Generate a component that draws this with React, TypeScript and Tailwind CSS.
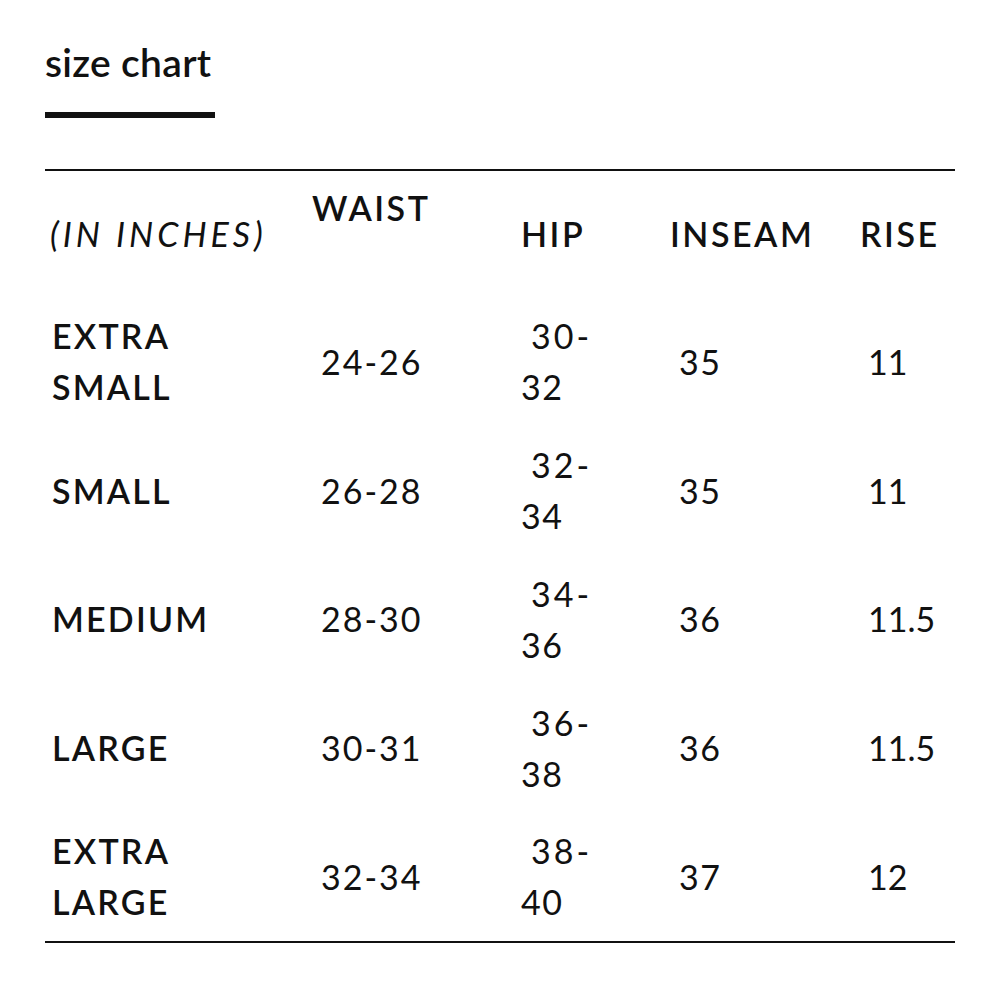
import React from "react";

const rows = [
  { label: ["EXTRA", "SMALL"], waist: "24-26", hip: ["30-", "32"], inseam: "35", rise: "11" },
  { label: ["SMALL"], waist: "26-28", hip: ["32-", "34"], inseam: "35", rise: "11" },
  { label: ["MEDIUM"], waist: "28-30", hip: ["34-", "36"], inseam: "36", rise: "11.5" },
  { label: ["LARGE"], waist: "30-31", hip: ["36-", "38"], inseam: "36", rise: "11.5" },
  { label: ["EXTRA", "LARGE"], waist: "32-34", hip: ["38-", "40"], inseam: "37", rise: "12" },
];

const grid = "grid grid-cols-[262px_209px_149px_190px_100px]";

export default function App() {
  return (
    <div
      className="w-[1000px] h-[1000px] bg-white text-[#111] px-[45px] pt-[38px]"
      style={{ fontFamily: "Lato, 'Open Sans', sans-serif" }}
    >
      <div className="text-[39px] font-semibold leading-[48px] tracking-[0.3px]">size chart</div>
      <div className="mt-[26px] w-[170px] h-[6px] bg-[#111]" />
      <div className="mt-[51px] border-t-2 border-[#111] border-b-2">
        <div className={`${grid} h-[126px] items-center text-[34px] leading-[50px] tracking-[2.5px]`}>
          <div className="pl-[5px] italic font-normal tracking-[4px]">(IN INCHES)</div>
          <div className="pl-[5px] font-semibold pb-[52px]">WAIST</div>
          <div className="pl-[5px] font-semibold">HIP</div>
          <div className="pl-[5px] font-semibold">INSEAM</div>
          <div className="pl-[5px] font-semibold">RISE</div>
        </div>
        {rows.map((r, i) => (
          <div
            key={i}
            className={`${grid} h-[128.75px] items-center text-[34px] leading-[51px] tracking-[1.5px]`}
          >
            <div className="pl-[7px] font-semibold tracking-[2.2px]">
              {r.label.map((l) => (
                <div key={l}>{l}</div>
              ))}
            </div>
            <div className="pl-[14px] tracking-[2px]">{r.waist}</div>
            <div className="pl-[5px]">
              <div className="pl-[10px] tracking-[3px]">{r.hip[0]}</div>
              <div>{r.hip[1]}</div>
            </div>
            <div className="pl-[14px]">{r.inseam}</div>
            <div className="pl-[13px] tracking-[0px]">{r.rise}</div>
          </div>
        ))}
      </div>
    </div>
  );
}
